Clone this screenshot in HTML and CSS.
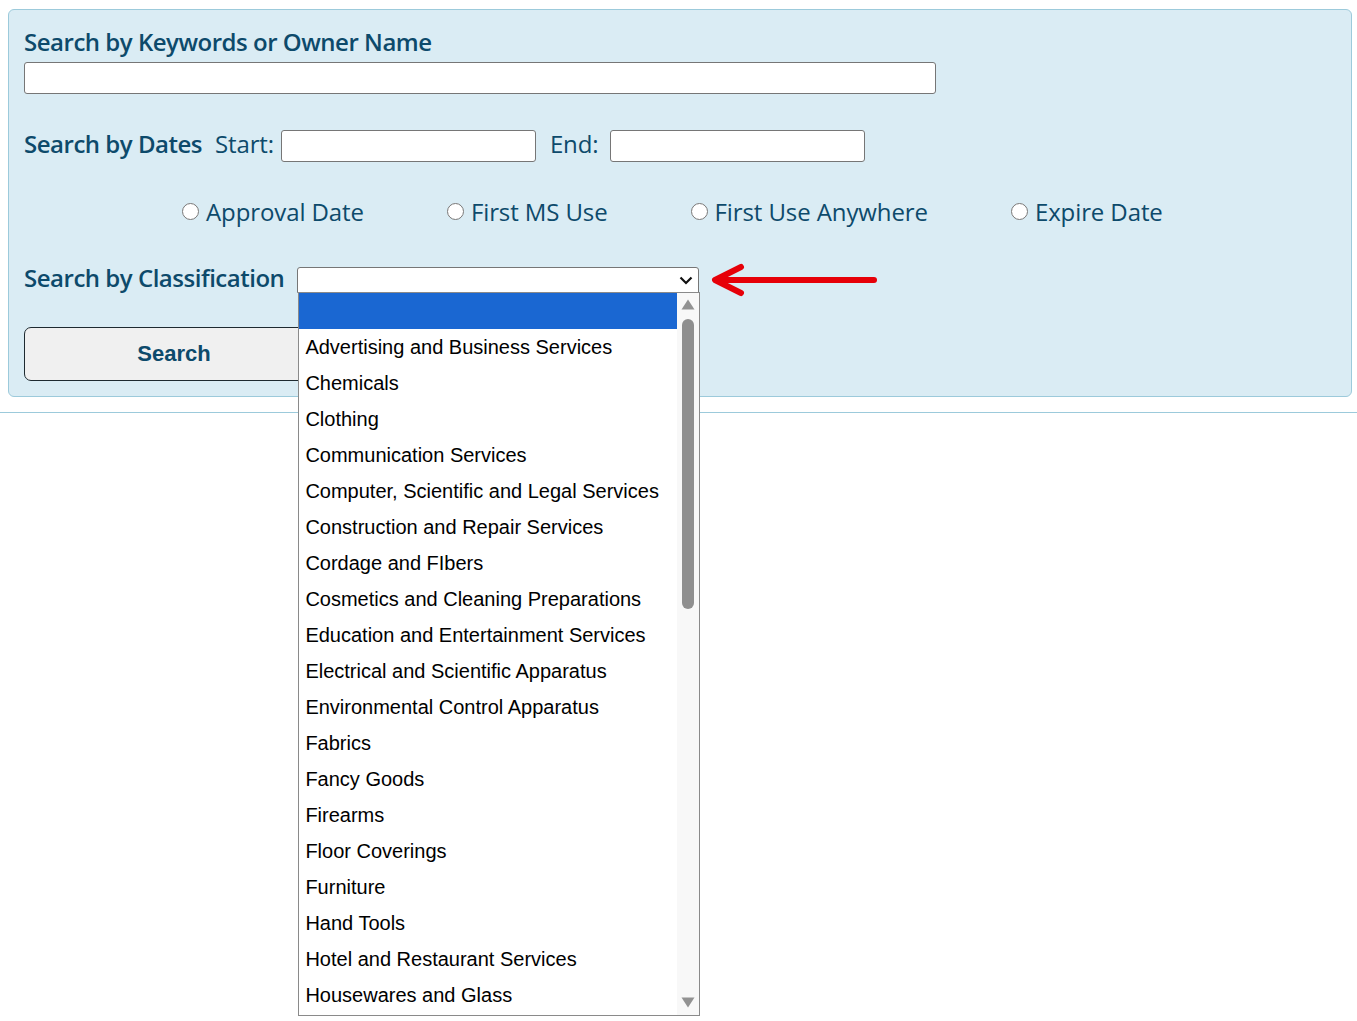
FILE: index.html
```html
<!DOCTYPE html>
<html lang="en">
<head>
  <meta charset="UTF-8" />
  <title>Trademark Search</title>
  <link rel="stylesheet" href="styles.css">
</head>
<body>
  <div class="page">
    <div class="search-panel">
      <div class="field-label">Search by Keywords or Owner Name</div>
      <input type="text" class="text-input keyword-input" />

      <div class="dates-row">
        <span class="field-label">Search by Dates</span>
        <span class="small-label start-label">Start:</span>
        <input type="text" class="text-input date-input" />
        <span class="small-label end-label">End:</span>
        <input type="text" class="text-input date-input" />
      </div>

      <div class="radio-row">
        <label class="radio"><input type="radio" name="datetype" /> Approval Date</label>
        <label class="radio"><input type="radio" name="datetype" /> First MS Use</label>
        <label class="radio"><input type="radio" name="datetype" /> First Use Anywhere</label>
        <label class="radio"><input type="radio" name="datetype" /> Expire Date</label>
      </div>

      <div class="class-row">
        <span class="field-label">Search by Classification</span>
        <div class="select-wrap">
          <div class="select-box">
            <svg class="chevron" width="16" height="10" viewBox="0 0 16 10"><path d="M2.5 2.5 L8 8 L13.5 2.5" fill="none" stroke="#111" stroke-width="2.2"/></svg>
          </div>
          <div class="dropdown">
            <ul class="options">
              <li class="selected">&nbsp;</li>
              <li>Advertising and Business Services</li>
              <li>Chemicals</li>
              <li>Clothing</li>
              <li>Communication Services</li>
              <li>Computer, Scientific and Legal Services</li>
              <li>Construction and Repair Services</li>
              <li>Cordage and FIbers</li>
              <li>Cosmetics and Cleaning Preparations</li>
              <li>Education and Entertainment Services</li>
              <li>Electrical and Scientific Apparatus</li>
              <li>Environmental Control Apparatus</li>
              <li>Fabrics</li>
              <li>Fancy Goods</li>
              <li>Firearms</li>
              <li>Floor Coverings</li>
              <li>Furniture</li>
              <li>Hand Tools</li>
              <li>Hotel and Restaurant Services</li>
              <li>Housewares and Glass</li>
            </ul>
            <div class="scrollbar">
              <svg class="arrow-up" width="14" height="12" viewBox="0 0 14 12"><path d="M0.5 11.5 L7 1.5 L13.5 11.5 Z" fill="#929292"/></svg>
              <div class="thumb"></div>
              <svg class="arrow-down" width="14" height="12" viewBox="0 0 14 12"><path d="M0.5 0.5 L7 10.5 L13.5 0.5 Z" fill="#929292"/></svg>
            </div>
          </div>
        </div>
        <svg class="red-arrow" width="170" height="34" viewBox="0 0 170 34">
          <path d="M6 17 L164 17" stroke="#e60008" stroke-width="6" stroke-linecap="round"/>
          <path d="M31 4 L5 17 L31 30" fill="none" stroke="#e60008" stroke-width="6" stroke-linecap="round" stroke-linejoin="round"/>
        </svg>
      </div>

      <button class="search-btn">Search</button>
    </div>
    <hr class="divider" />
  </div>
</body>
</html>
```
FILE: styles.css
```css
body {
  margin: 0;
  background: #fff;
  font-family: "Open Sans", sans-serif;
  color: #0d4a6b;
}

.page {
  padding-top: 9px;
  min-height: 1012px;
}

.search-panel {
  margin: 0 5px 0 8px;
  padding: 14px 15px 15px;
  background: #daecf4;
  border: 1px solid #9ccadb;
  border-radius: 6px;
  display: flex;
  flex-direction: column;
  align-items: flex-start;
}

.field-label {
  font-size: 24px;
  font-weight: 600;
  line-height: 36px;
  letter-spacing: -0.48px;
  white-space: nowrap;
}

.search-panel > .field-label {
  margin-bottom: 2px;
}

.small-label {
  font-size: 24px;
  line-height: 32px;
  letter-spacing: -0.15px;
}

.dates-row .field-label,
.dates-row .small-label,
.class-row .field-label {
  padding-bottom: 4px;
}

.text-input {
  height: 32px;
  box-sizing: border-box;
  border: 1px solid #767676;
  border-radius: 3px;
  background: #fff;
  margin: 0;
  padding: 0 4px;
}

.keyword-input {
  width: 912px;
}

.dates-row {
  display: flex;
  align-items: center;
  height: 32px;
  margin-top: 36px;
}

.start-label {
  margin-left: 13px;
  margin-right: 7px;
}

.end-label {
  margin-left: 14px;
  margin-right: 12px;
}

.date-input {
  width: 255px;
}

.radio-row {
  display: flex;
  align-items: center;
  gap: 83px;
  height: 32px;
  margin-top: 34px;
  padding-left: 158px;
}

.radio {
  display: flex;
  align-items: center;
  gap: 7px;
  font-size: 24px;
  letter-spacing: -0.1px;
  white-space: nowrap;
  padding-bottom: 2px;
}

.radio input {
  width: 17px;
  height: 17px;
  margin: 0;
}

.class-row {
  display: flex;
  align-items: center;
  height: 32px;
  margin-top: 36px;
}

.select-wrap {
  position: relative;
  margin-left: 13px;
}

.select-box {
  width: 402px;
  height: 26px;
  box-sizing: border-box;
  background: #fff;
  border: 1px solid #767676;
  border-radius: 3px 3px 0 0;
  display: flex;
  align-items: center;
  justify-content: flex-end;
  padding-right: 4px;
}

.dropdown {
  position: absolute;
  top: 25px;
  left: 1px;
  width: 402px;
  height: 724px;
  box-sizing: border-box;
  background: #fff;
  border: 1px solid #8a8a8a;
  display: flex;
  z-index: 10;
}

.options {
  list-style: none;
  margin: 0;
  padding: 0;
  flex: 1;
  font-family: "Liberation Sans", Arial, sans-serif;
  font-size: 20px;
  color: #000;
}

.options li {
  height: 36px;
  line-height: 36px;
  padding-left: 6px;
  white-space: nowrap;
}

.options li.selected {
  background: #1a67d2;
}

.scrollbar {
  width: 22px;
  background: #f8f8f8;
  display: flex;
  flex-direction: column;
  align-items: center;
  padding: 5px 0 6px;
  box-sizing: border-box;
}

.thumb {
  width: 12px;
  height: 290px;
  margin-top: 9px;
  background: #8f8f8f;
  border-radius: 6px;
}

.arrow-down {
  margin-top: auto;
}

.red-arrow {
  margin-left: 11px;
}

.search-btn {
  margin-top: 31px;
  width: 300px;
  height: 54px;
  background: #f0f0f0;
  border: 1px solid #1e2a30;
  border-radius: 7px;
  font-family: "Liberation Sans", Arial, sans-serif;
  font-size: 22px;
  font-weight: bold;
  color: #0d4a6b;
  cursor: pointer;
}

.divider {
  margin: 15px 0 0;
  border: 0;
  border-top: 1px solid #9ccadb;
}
```
